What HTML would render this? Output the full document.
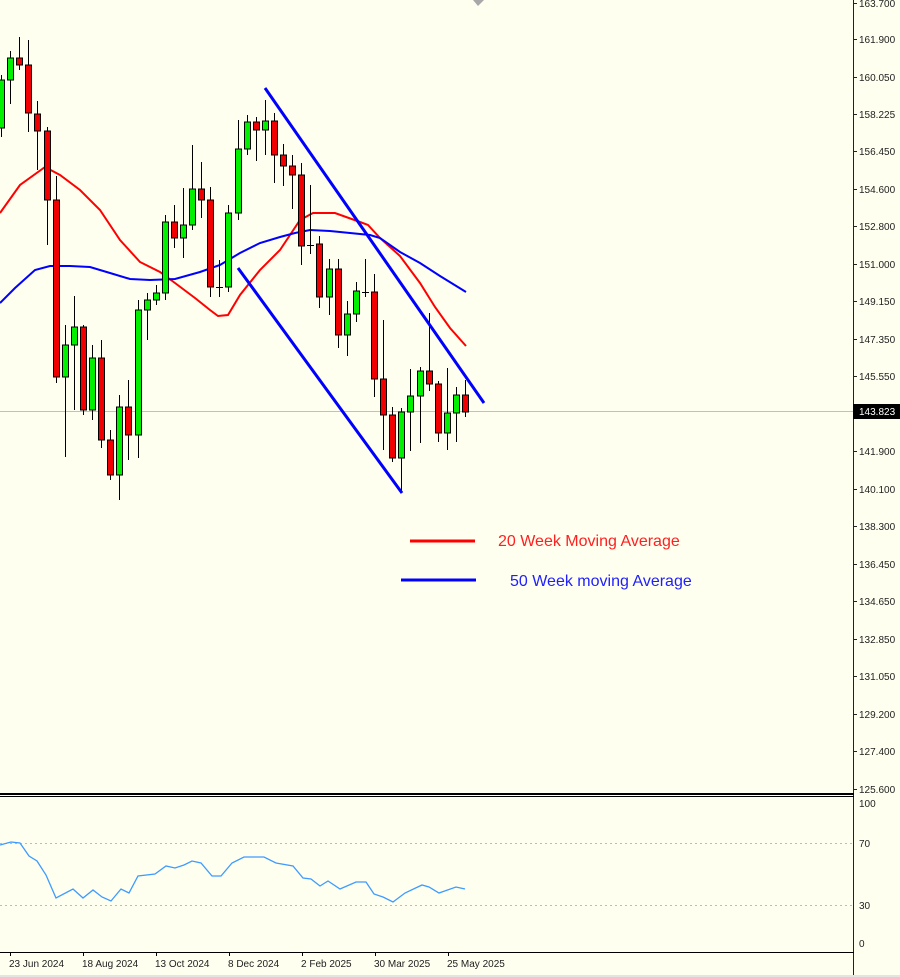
<!DOCTYPE html>
<html><head><meta charset="utf-8"><style>
html,body{margin:0;padding:0;background:#FFFFF0;width:900px;height:977px;overflow:hidden}
svg{display:block}
text{font-family:"Liberation Sans",sans-serif}
.ax{font-size:10px;fill:#222}
</style></head><body>
<svg width="900" height="977" viewBox="0 0 900 977" xmlns="http://www.w3.org/2000/svg">
<rect width="900" height="977" fill="#FFFFF0"/>
<polygon points="473,0 484,0 478,6" fill="#A8A8A8"/>
<!-- current price line -->
<line x1="0" y1="411.5" x2="853" y2="411.5" stroke="#C0C0C0" stroke-width="1"/>
<!-- MAs -->
<polyline fill="none" stroke="#FF0000" stroke-width="2" points="0,213 20,185 45,167 60,175 80,190 100,210 120,240 140,262 160,272 175,283 195,298 210,310 218,316 228,315 240,295 260,270 280,250 300,220 313,213 335,213 360,222 368,225 380,238 400,256 420,283 435,307 450,328 466,346"/>
<polyline fill="none" stroke="#0000FF" stroke-width="2" points="0,303 15,288 35,270 50,266 70,266 90,267 110,273 130,279 150,280 175,279 200,272 220,265 240,253 260,243 280,237 295,233 310,230 330,231 350,233 370,235 380,238 400,252 420,263 440,276 466,292"/>
<!-- candles -->
<g stroke="#000" stroke-width="1">
<g id="wicks">
<line x1="1.5" y1="75" x2="1.5" y2="137"/><line x1="10.5" y1="51" x2="10.5" y2="104"/><line x1="19.5" y1="37" x2="19.5" y2="70"/><line x1="28.5" y1="40" x2="28.5" y2="132"/><line x1="37.5" y1="101" x2="37.5" y2="170"/><line x1="47.5" y1="127" x2="47.5" y2="245"/><line x1="56.5" y1="176" x2="56.5" y2="383"/><line x1="65.5" y1="325" x2="65.5" y2="457"/><line x1="74.5" y1="296" x2="74.5" y2="410"/><line x1="83.5" y1="325" x2="83.5" y2="415"/><line x1="92.5" y1="345" x2="92.5" y2="420"/><line x1="101.5" y1="340" x2="101.5" y2="448"/><line x1="110.5" y1="430" x2="110.5" y2="480"/><line x1="119.5" y1="395" x2="119.5" y2="500"/><line x1="128.5" y1="380" x2="128.5" y2="460"/><line x1="138.5" y1="300" x2="138.5" y2="458"/><line x1="147.5" y1="293" x2="147.5" y2="340"/><line x1="156.5" y1="285" x2="156.5" y2="305"/><line x1="165.5" y1="215" x2="165.5" y2="300"/><line x1="174.5" y1="205" x2="174.5" y2="248"/><line x1="183.5" y1="188" x2="183.5" y2="258"/><line x1="192.5" y1="145" x2="192.5" y2="230"/><line x1="201.5" y1="162" x2="201.5" y2="218"/><line x1="210.5" y1="187" x2="210.5" y2="297"/><line x1="219.5" y1="260" x2="219.5" y2="297"/><line x1="228.5" y1="205" x2="228.5" y2="292"/><line x1="238.5" y1="120" x2="238.5" y2="220"/><line x1="247.5" y1="115" x2="247.5" y2="155"/><line x1="256.5" y1="117" x2="256.5" y2="161"/><line x1="265.5" y1="100" x2="265.5" y2="155"/><line x1="274.5" y1="113" x2="274.5" y2="183"/><line x1="283.5" y1="144" x2="283.5" y2="186"/><line x1="292.5" y1="155" x2="292.5" y2="209"/><line x1="301.5" y1="163" x2="301.5" y2="265"/><line x1="310.5" y1="185" x2="310.5" y2="254"/><line x1="319.5" y1="236" x2="319.5" y2="308"/><line x1="329.5" y1="259" x2="329.5" y2="315"/><line x1="338.5" y1="259" x2="338.5" y2="348"/><line x1="347.5" y1="301" x2="347.5" y2="356"/><line x1="356.5" y1="282" x2="356.5" y2="322"/><line x1="365.5" y1="259" x2="365.5" y2="297"/><line x1="374.5" y1="274" x2="374.5" y2="397"/><line x1="383.5" y1="320" x2="383.5" y2="450"/><line x1="392.5" y1="407" x2="392.5" y2="462"/><line x1="401.5" y1="408" x2="401.5" y2="492"/><line x1="410.5" y1="369" x2="410.5" y2="451"/><line x1="420.5" y1="367" x2="420.5" y2="443"/><line x1="429.5" y1="313" x2="429.5" y2="391"/><line x1="438.5" y1="381" x2="438.5" y2="442"/><line x1="447.5" y1="368" x2="447.5" y2="450"/><line x1="456.5" y1="387" x2="456.5" y2="442"/><line x1="465.5" y1="380" x2="465.5" y2="417"/>
</g>
<g fill="#00F000">
<rect x="-1.5" y="80" width="6" height="48"/><rect x="7.5" y="58" width="6" height="22"/><rect x="62.5" y="345" width="6" height="32"/><rect x="71.5" y="327" width="6" height="18"/><rect x="89.5" y="358" width="6" height="52"/><rect x="116.5" y="407" width="6" height="68"/><rect x="135.5" y="310" width="6" height="125"/><rect x="144.5" y="300" width="6" height="10"/><rect x="153.5" y="293" width="6" height="7"/><rect x="162.5" y="222" width="6" height="71"/><rect x="180.5" y="225" width="6" height="13"/><rect x="189.5" y="189" width="6" height="36"/><rect x="225.5" y="213" width="6" height="74"/><rect x="235.5" y="149" width="6" height="64"/><rect x="244.5" y="122" width="6" height="27"/><rect x="262.5" y="121" width="6" height="9"/><rect x="326.5" y="269" width="6" height="28"/><rect x="344.5" y="314" width="6" height="21"/><rect x="353.5" y="291" width="6" height="23"/><rect x="398.5" y="412" width="6" height="46"/><rect x="407.5" y="396" width="6" height="16"/><rect x="417.5" y="371" width="6" height="25"/><rect x="444.5" y="413" width="6" height="20"/><rect x="453.5" y="395" width="6" height="18"/>
</g>
<g fill="#F00000">
<rect x="16.5" y="58" width="6" height="7"/><rect x="25.5" y="65" width="6" height="48"/><rect x="34.5" y="114" width="6" height="17"/><rect x="44.5" y="131" width="6" height="69"/><rect x="53.5" y="200" width="6" height="177"/><rect x="80.5" y="327" width="6" height="83"/><rect x="98.5" y="358" width="6" height="82"/><rect x="107.5" y="440" width="6" height="35"/><rect x="125.5" y="407" width="6" height="28"/><rect x="171.5" y="222" width="6" height="16"/><rect x="198.5" y="189" width="6" height="11"/><rect x="207.5" y="200" width="6" height="87"/><rect x="253.5" y="122" width="6" height="8"/><rect x="271.5" y="121" width="6" height="34"/><rect x="280.5" y="155" width="6" height="11"/><rect x="289.5" y="166" width="6" height="9"/><rect x="298.5" y="175" width="6" height="71"/><rect x="316.5" y="244" width="6" height="53"/><rect x="335.5" y="269" width="6" height="66"/><rect x="371.5" y="292" width="6" height="87"/><rect x="380.5" y="379" width="6" height="36"/><rect x="389.5" y="415" width="6" height="43"/><rect x="426.5" y="371" width="6" height="13"/><rect x="435.5" y="384" width="6" height="49"/><rect x="462.5" y="395" width="6" height="17"/>
</g>
<line x1="216" y1="287.5" x2="223" y2="287.5"/><line x1="307" y1="245.5" x2="314" y2="245.5"/><line x1="362" y1="292.5" x2="369" y2="292.5"/>
</g>
<!-- trend lines -->
<line x1="265" y1="88" x2="484" y2="403" stroke="#0000FF" stroke-width="3"/>
<line x1="238" y1="268" x2="402" y2="493" stroke="#0000FF" stroke-width="3"/>
<!-- legend -->
<line x1="410" y1="541" x2="475" y2="541" stroke="#FF0000" stroke-width="3"/>
<text x="498" y="546" font-size="16" fill="#FF2020">20 Week Moving Average</text>
<line x1="401" y1="580" x2="476" y2="580" stroke="#0000FF" stroke-width="3"/>
<text x="510" y="586" font-size="16" fill="#2020FF">50 Week moving Average</text>
<!-- axis -->
<line x1="853.5" y1="0" x2="853.5" y2="977" stroke="#222" stroke-width="1"/>
<g class="ax">
<text x="859" y="7">163.700</text><text x="859" y="43">161.900</text><text x="859" y="81">160.050</text><text x="859" y="118">158.225</text><text x="859" y="155">156.450</text><text x="859" y="193">154.600</text><text x="859" y="230">152.800</text><text x="859" y="268">151.000</text><text x="859" y="305">149.150</text><text x="859" y="343">147.350</text><text x="859" y="380">145.550</text><text x="859" y="455">141.900</text><text x="859" y="493">140.100</text><text x="859" y="530">138.300</text><text x="859" y="568">136.450</text><text x="859" y="605">134.650</text><text x="859" y="643">132.850</text><text x="859" y="680">131.050</text><text x="859" y="718">129.200</text><text x="859" y="755">127.400</text><text x="859" y="793">125.600</text>
<text x="859" y="807">100</text><text x="859" y="847">70</text><text x="859" y="909">30</text><text x="859" y="947">0</text>
</g>
<g stroke="#222"><line x1="853" y1="3.5" x2="857" y2="3.5"/><line x1="853" y1="39.5" x2="857" y2="39.5"/><line x1="853" y1="77.5" x2="857" y2="77.5"/><line x1="853" y1="114.5" x2="857" y2="114.5"/><line x1="853" y1="151.5" x2="857" y2="151.5"/><line x1="853" y1="189.5" x2="857" y2="189.5"/><line x1="853" y1="226.5" x2="857" y2="226.5"/><line x1="853" y1="264.5" x2="857" y2="264.5"/><line x1="853" y1="301.5" x2="857" y2="301.5"/><line x1="853" y1="339.5" x2="857" y2="339.5"/><line x1="853" y1="376.5" x2="857" y2="376.5"/><line x1="853" y1="451.5" x2="857" y2="451.5"/><line x1="853" y1="489.5" x2="857" y2="489.5"/><line x1="853" y1="526.5" x2="857" y2="526.5"/><line x1="853" y1="564.5" x2="857" y2="564.5"/><line x1="853" y1="601.5" x2="857" y2="601.5"/><line x1="853" y1="639.5" x2="857" y2="639.5"/><line x1="853" y1="676.5" x2="857" y2="676.5"/><line x1="853" y1="714.5" x2="857" y2="714.5"/><line x1="853" y1="751.5" x2="857" y2="751.5"/><line x1="853" y1="789.5" x2="857" y2="789.5"/></g>
<rect x="853" y="404" width="47" height="15" fill="#000"/>
<text x="859" y="415" font-size="10" fill="#fff">143.823</text>
<!-- panel separators -->
<rect x="0" y="793" width="854" height="2" fill="#000"/>
<line x1="0" y1="796.5" x2="854" y2="796.5" stroke="#000"/>
<line x1="0" y1="952.5" x2="854" y2="952.5" stroke="#000"/>
<line x1="0" y1="843.5" x2="853" y2="843.5" stroke="#BBB" stroke-dasharray="2,3"/>
<line x1="0" y1="905.5" x2="853" y2="905.5" stroke="#BBB" stroke-dasharray="2,3"/>
<polyline fill="none" stroke="#3D9BFF" stroke-width="1.3" points="0,845 11,842 20,843 29,856 37,861 46,875 56,898 73,889 83,898 93,890 102,897 111,901 121,889 129,893 138,876 155,874 166,866 175,868 184,865 192,861 201,863 212,876 221,876 232,863 244,857 264,857 276,863 293,866 303,878 311,879 320,886 328,881 340,889 356,882 366,882 374,894 383,897 393,902 405,893 422,885 429,887 439,893 456,887 465,889"/>
<!-- date axis -->
<g stroke="#000"><line x1="10.5" y1="952" x2="10.5" y2="956"/><line x1="83.5" y1="952" x2="83.5" y2="956"/><line x1="156.5" y1="952" x2="156.5" y2="956"/><line x1="229.5" y1="952" x2="229.5" y2="956"/><line x1="302.5" y1="952" x2="302.5" y2="956"/><line x1="375.5" y1="952" x2="375.5" y2="956"/><line x1="448.5" y1="952" x2="448.5" y2="956"/></g>
<g class="ax">
<text x="9" y="967">23 Jun 2024</text><text x="82" y="967">18 Aug 2024</text><text x="155" y="967">13 Oct 2024</text><text x="228" y="967">8 Dec 2024</text><text x="301" y="967">2 Feb 2025</text><text x="374" y="967">30 Mar 2025</text><text x="447" y="967">25 May 2025</text>
</g>
<rect x="0" y="975" width="900" height="2" fill="#E4E4E4"/>
</svg>
</body></html>
